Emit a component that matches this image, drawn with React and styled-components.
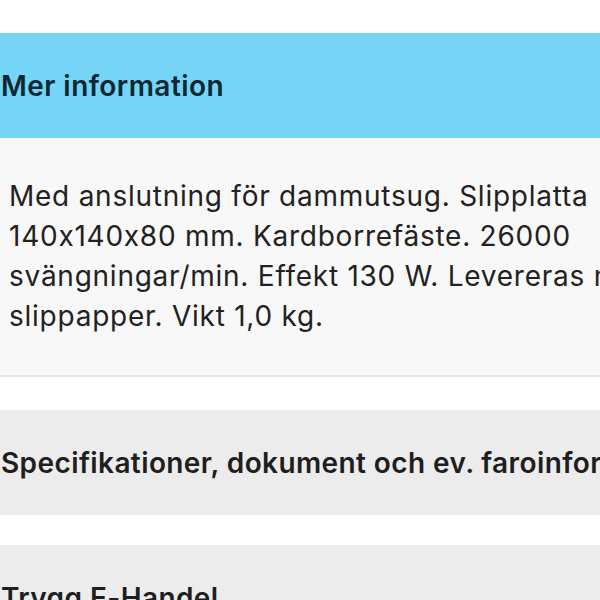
import React from "react";
import styled, { createGlobalStyle } from "styled-components";

const GlobalStyle = createGlobalStyle`
  html, body {
    margin: 0;
    padding: 0;
    background: #ffffff;
    overflow: hidden;
  }
  body {
    font-family: Inter, "Liberation Sans", sans-serif;
    font-feature-settings: "calt" 0;
  }
`;

const Page = styled.div`
  width: 600px;
  height: 600px;
  overflow: hidden;
  display: flex;
  flex-direction: column;
  padding-top: 33px;
  box-sizing: border-box;
`;

const Section = styled.section`
  display: flex;
  flex-direction: column;
  margin-bottom: ${(p) => p.gap || 0}px;
  flex-shrink: 0;
`;

const Header = styled.div`
  height: 105px;
  display: flex;
  align-items: center;
  padding-left: 1px;
  background: ${(p) => (p.active ? "#76d5f7" : "#ececec")};
  color: ${(p) => (p.active ? "#0d2733" : "#1e1e1e")};
  font-size: 28px;
  letter-spacing: ${(p) => (p.active ? 0.45 : 0.4)}px;
  font-weight: 600;
  white-space: nowrap;
  flex-shrink: 0;
`;

const Body = styled.div`
  background: #f8f8f8;
  border-bottom: 2px solid #e6e6e6;
  padding: 38px 0 39px 9px;
  color: #222222;
  font-size: 28px;
  letter-spacing: 0.75px;
  line-height: 40px;
`;

const Line = styled.span`
  display: block;
  white-space: nowrap;
`;

const lines = [
  "Med anslutning för dammutsug. Slipplatta",
  "140x140x80 mm. Kardborrefäste. 26000",
  "svängningar/min. Effekt 130 W. Levereras med",
  "slippapper. Vikt 1,0 kg.",
];

export default function App() {
  return (
    <>
      <GlobalStyle />
      <Page>
        <Section gap={33}>
          <Header active>Mer information</Header>
          <Body>
            {lines.map((l) => (
              <Line key={l}>{l}</Line>
            ))}
          </Body>
        </Section>
        <Section gap={30}>
          <Header>Specifikationer, dokument och ev. faroinformation</Header>
        </Section>
        <Section>
          <Header>Trygg E-Handel</Header>
        </Section>
      </Page>
    </>
  );
}
